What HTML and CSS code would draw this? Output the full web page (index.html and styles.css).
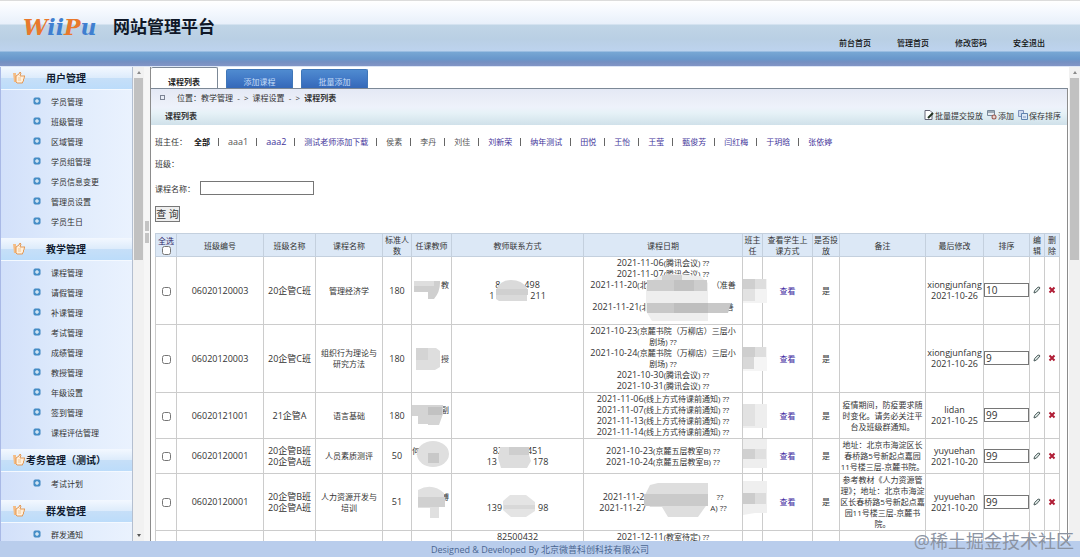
FILE: index.html
```html
<!DOCTYPE html>
<html lang="zh-CN">
  <head>
    <meta charset="utf-8">
    <meta name="viewport" content="width=device-width, initial-scale=1.0">
    <title>网站管理平台</title>
    <link rel="stylesheet" href="styles.css">
  </head>

  <body>
    <!-- Shared icons -->
    <svg class="sprite" aria-hidden="true">
      <symbol id="hand" viewBox="0 0 14 14">
        <path d="M1 2h3v9H2z" fill="#f4bc84"/>
        <path d="M4 5l3-2 1-2 1 1-1 3h5l-1 1 .500 1-1 1v2l-1 1v1H5l-1-1z" fill="#fff0dc" stroke="#e39a58" stroke-width="1"/>
        <path d="M6 7h3M6 9h3" stroke="#f4c796" stroke-width="1"/>
      </symbol>
      <symbol id="plus" viewBox="0 0 8 8">
        <rect x="1" y="1" width="6" height="6" rx="1" fill="#4d94cc" stroke="#3f86c0"/>
        <path d="M4 2v4M2 4h4" stroke="#fff" stroke-width="1"/>
      </symbol>
      <symbol id="pen" viewBox="0 0 8 8">
        <path d="M1 7l.600-2.500L5 1.200q1.500-.600 2 .800L3.500 6z" fill="#dfe9e6" stroke="#4c5c5c" stroke-width="1"/>
      </symbol>
      <symbol id="cross" viewBox="0 0 8 8">
        <path d="M1.500 1.500l5 5M6.500 1.500l-5 5" stroke="#b01c34" stroke-width="2"/>
      </symbol>
    </svg>

    <header class="top">
      <div class="logo" aria-label="WiiPu"><span class="orange">W</span><span class="blue">ii</span><span class="orange">P</span><span class="blue">u</span></div>
      <h1>网站管理平台</h1>
      <nav class="top-nav">
        <a href="#">前台首页</a>
        <a href="#">管理首页</a>
        <a href="#">修改密码</a>
        <a href="#">安全退出</a>
      </nav>
    </header>

    <div class="frames">
      <aside class="sidebar">
        <h2><svg><use href="#hand"/></svg><span>用户管理</span></h2>
        <ul>
          <li><svg><use href="#plus"/></svg><a href="#">学员管理</a></li>
          <li><svg><use href="#plus"/></svg><a href="#">班级管理</a></li>
          <li><svg><use href="#plus"/></svg><a href="#">区域管理</a></li>
          <li><svg><use href="#plus"/></svg><a href="#">学员组管理</a></li>
          <li><svg><use href="#plus"/></svg><a href="#">学员信息变更</a></li>
          <li><svg><use href="#plus"/></svg><a href="#">管理员设置</a></li>
          <li><svg><use href="#plus"/></svg><a href="#">学员生日</a></li>
        </ul>
        <h2><svg><use href="#hand"/></svg><span>教学管理</span></h2>
        <ul>
          <li><svg><use href="#plus"/></svg><a href="#">课程管理</a></li>
          <li><svg><use href="#plus"/></svg><a href="#">请假管理</a></li>
          <li><svg><use href="#plus"/></svg><a href="#">补课管理</a></li>
          <li><svg><use href="#plus"/></svg><a href="#">考试管理</a></li>
          <li><svg><use href="#plus"/></svg><a href="#">成绩管理</a></li>
          <li><svg><use href="#plus"/></svg><a href="#">教授管理</a></li>
          <li><svg><use href="#plus"/></svg><a href="#">年级设置</a></li>
          <li><svg><use href="#plus"/></svg><a href="#">签到管理</a></li>
          <li><svg><use href="#plus"/></svg><a href="#">课程评估管理</a></li>
        </ul>
        <h2><svg><use href="#hand"/></svg><span>考务管理（测试）</span></h2>
        <ul>
          <li><svg><use href="#plus"/></svg><a href="#">考试计划</a></li>
        </ul>
        <h2><svg><use href="#hand"/></svg><span>群发管理</span></h2>
        <ul>
          <li><svg><use href="#plus"/></svg><a href="#">群发通知</a></li>
        </ul>
      </aside>
      <div class="scrollbar">
        <i class="arrow up"></i>
        <i class="thumb"></i>
        <i class="arrow down"></i>
      </div>
      <div class="splitter"><i></i><i></i></div>

      <main>
        <div class="tabs">
          <a class="tab active" href="#">课程列表</a>
          <a class="tab" href="#">添加课程</a>
          <a class="tab" href="#">批量添加</a>
        </div>

        <div class="panel">
          <div class="panel-head">
            <div class="crumbs">
              <i class="dot"></i>
              <span>位置：教学管理 &nbsp;- &nbsp;&gt;&nbsp; 课程设置 &nbsp;- &nbsp;&gt;&nbsp; <b>课程列表</b></span>
            </div>
            <div class="title-row">
              <b>课程列表</b>
              <div class="actions">
                <a href="#">
                  <svg viewBox="0 0 10 10"><path d="M1 .500h5l2 2v7H1z" fill="#fff" stroke="#667"/><path d="M4 8l5-5" stroke="#232" stroke-width="2"/></svg>批量提交投放</a>
                <a href="#">
                  <svg viewBox="0 0 10 10"><path d="M.500.500h7v5h-7z" fill="#e8eef4" stroke="#789"/><path d="M1 2h6" stroke="#567"/><circle cx="7" cy="7" r="2.500" fill="#9a5a50"/><path d="M7 5.500v3M5.500 7h3" stroke="#fff"/></svg>添加</a>
                <a href="#">
                  <svg viewBox="0 0 10 10"><path d="M.500.500h5v6h-5z" fill="#cfdcf0" stroke="#7f93bd"/><path d="M3.500 3.500h6v6h-6z" fill="#dbe8f6" stroke="#5f83ae"/><path d="M5 7h3" stroke="#7f93bd"/></svg>保存排序</a>
              </div>
            </div>
          </div>

          <div class="filter">
            <span class="label">班主任：</span>
            <a class="all" href="#">全部</a><i></i>
            <a class="latin gray" href="#">aaa1</a><i></i>
            <a class="latin" href="#">aaa2</a><i></i>
            <a href="#">测试老师添加下载</a><i></i>
            <a class="gray" href="#">侯素</a><i></i>
            <a class="gray" href="#">李丹</a><i></i>
            <a class="gray" href="#">刘佳</a><i></i>
            <a href="#">刘新荣</a><i></i>
            <a href="#">纳年测试</a><i></i>
            <a href="#">田悦</a><i></i>
            <a href="#">王怡</a><i></i>
            <a href="#">王莹</a><i></i>
            <a href="#">甄俊芳</a><i></i>
            <a href="#">闫红梅</a><i></i>
            <a href="#">于玥晗</a><i></i>
            <a href="#">张依婷</a>
          </div>
          <div class="filter">班级：</div>
          <form class="search">
            <div class="search-row">
              <label for="courseName">课程名称：</label>
              <input type="text" id="courseName">
            </div>
            <button type="button">查 询</button>
          </form>

          <table>
            <colgroup>
              <col class="c-check"><col class="c-code"><col class="c-class"><col class="c-course">
              <col class="c-count"><col class="c-teacher"><col class="c-contact"><col class="c-dates">
              <col class="c-head"><col class="c-view"><col class="c-put"><col>
              <col class="c-edited"><col class="c-sort"><col class="c-icon"><col class="c-icon">
            </colgroup>
            <thead>
              <tr>
                <th><label class="check-all" for="all">全选</label><input type="checkbox" id="all"></th>
                <th>班级编号</th>
                <th>班级名称</th>
                <th>课程名称</th>
                <th>标准人数</th>
                <th>任课教师</th>
                <th>教师联系方式</th>
                <th>课程日期</th>
                <th>班主任</th>
                <th class="inset">查看学生上课方式</th>
                <th>是否投放</th>
                <th>备注</th>
                <th>最后修改</th>
                <th>排序</th>
                <th>编辑</th>
                <th>删除</th>
              </tr>
            </thead>
            <tbody>
              <tr>
                <td><input type="checkbox" aria-label="选择"></td>
                <td class="num">06020120003</td>
                <td class="num">20企管C班</td>
                <td class="inset">管理经济学</td>
                <td class="num">180</td>
                <td class="teacher">教<br>&nbsp;
                  <svg class="mask" viewBox="0 0 40 24"><path d="M2 2h26v2q0 9-6 16h-6v-7H2z" fill="#cfcfcf"/><path d="M2 2h20v5H2z" fill="#dedede"/></svg>
                </td>
                <td class="num phone"><span>8</span><span>498</span><br><span class="wide">1</span><span>211</span>
                  <svg class="mask" viewBox="0 0 40 24"><path d="M5 20V11Q9 1 20 1q11 0 16 8v13H8z" fill="#dadada"/><path d="M5 10h32v6H5z" fill="#d0d0d0"/></svg>
                </td>
                <td class="dates">
                  <time>2021-11-06</time>(腾讯会议) ??<br>
                  <time>2021-11-07</time>(腾讯会议) ??<br>
                  <time>2021-11-20</time>(北<span class="blank"></span>（准善<br>&nbsp;<br>
                  <time>2021-11-21</time>(北<span class="blank"></span>&emsp;&ensp;善<br>&nbsp;
                  <svg class="mask tall" viewBox="0 0 90 54"><path d="M12 8Q18 3 34 3l24 2 8 7v38H10L4 40V16z" fill="#eeeeee"/><path d="M20 4h20v5H20z" fill="#d2d2d2"/><path d="M5 9h60v11H5z" fill="#cdcdcd"/><path d="M32 9h20v11H32z" fill="#c2c2c2"/><path d="M5 32h84l-3 10H5z" fill="#c8c8c8"/><path d="M32 32h34v10H32z" fill="#bebebe"/></svg>
                </td>
                <td><svg class="mask head" viewBox="0 0 24 24"><path d="M0 0h24v24H0z" fill="#f3f3f3"/><path d="M0 0h12v10H0z" fill="#cfcfcf"/><path d="M12 0h11v10H12z" fill="#dedede"/><path d="M0 10h12v12H0z" fill="#e2e2e2"/></svg></td>
                <td><a href="#">查看</a></td>
                <td>是</td>
                <td></td>
                <td class="num">xiongjunfang<br>2021-10-26</td>
                <td><input type="text" value="10" aria-label="排序"></td>
                <td><a href="#" aria-label="编辑"><svg><use href="#pen"/></svg></a></td>
                <td><a href="#" aria-label="删除"><svg><use href="#cross"/></svg></a></td>
              </tr>
              <tr>
                <td><input type="checkbox" aria-label="选择"></td>
                <td class="num">06020120003</td>
                <td class="num">20企管C班</td>
                <td class="inset">组织行为理论与研究方法</td>
                <td class="num">180</td>
                <td class="teacher">授
                  <svg class="mask" viewBox="0 0 40 24"><path d="M4 1h20l4 3v16l-5 3H4z" fill="#dedede"/><path d="M4 1h12v12H4z" fill="#d4d4d4"/></svg>
                </td>
                <td></td>
                <td class="dates">
                  <time>2021-10-23</time>(京麓书院（万柳店）三层小<br>剧场) ??<br>
                  <time>2021-10-24</time>(京麓书院（万柳店）三层小<br>剧场) ??<br>
                  <time>2021-10-30</time>(腾讯会议) ??<br>
                  <time>2021-10-31</time>(腾讯会议) ??
                </td>
                <td><svg class="mask head" viewBox="0 0 24 24"><path d="M0 0h24v24H0z" fill="#f5f5f5"/><path d="M0 0h12v10H0z" fill="#cecece"/><path d="M12 0h11v10H12z" fill="#dedede"/><path d="M0 10h11v12H0z" fill="#d8d8d8"/></svg></td>
                <td><a href="#">查看</a></td>
                <td>是</td>
                <td></td>
                <td class="num">xiongjunfang<br>2021-10-26</td>
                <td><input type="text" value="9" aria-label="排序"></td>
                <td><a href="#" aria-label="编辑"><svg><use href="#pen"/></svg></a></td>
                <td><a href="#" aria-label="删除"><svg><use href="#cross"/></svg></a></td>
              </tr>
              <tr>
                <td><input type="checkbox" aria-label="选择"></td>
                <td class="num">06020121001</td>
                <td class="num">21企管A</td>
                <td class="inset">语言基础</td>
                <td class="num">180</td>
                <td class="teacher">副<br>&nbsp;
                  <svg class="mask" viewBox="0 0 40 24"><path d="M0 1h31v9l-4 11H16v-1H6V12H0z" fill="#d4d4d4"/><path d="M16 3h14v8H16z" fill="#c2c2c2"/></svg>
                </td>
                <td></td>
                <td class="dates">
                  <time>2021-11-06</time>(线上方式待课前通知) ??<br>
                  <time>2021-11-07</time>(线上方式待课前通知) ??<br>
                  <time>2021-11-13</time>(线上方式待课前通知) ??<br>
                  <time>2021-11-14</time>(线上方式待课前通知) ??
                </td>
                <td><svg class="mask head" viewBox="0 0 24 24"><path d="M0 0h24v24H0z" fill="#eeeeee"/><path d="M0 0h12v22H0z" fill="#e2e2e2"/></svg></td>
                <td><a href="#">查看</a></td>
                <td>是</td>
                <td>疫情期间，防疫要求随时变化。请务必关注平台及班级群通知。</td>
                <td class="num">lidan<br>2021-10-25</td>
                <td><input type="text" value="99" aria-label="排序"></td>
                <td><a href="#" aria-label="编辑"><svg><use href="#pen"/></svg></a></td>
                <td><a href="#" aria-label="删除"><svg><use href="#cross"/></svg></a></td>
              </tr>
              <tr>
                <td><input type="checkbox" aria-label="选择"></td>
                <td class="num">06020120001</td>
                <td class="num">20企管B班<br>20企管A班</td>
                <td class="inset">人员素质测评</td>
                <td class="num">50</td>
                <td class="teacher"><span class="surname">何</span><br>&nbsp;
                  <svg class="mask" viewBox="0 0 40 24"><ellipse cx="21" cy="10" rx="16" ry="13" fill="#dfdfdf"/><path d="M16 9h11v10H16z" fill="#c8c8c8"/></svg>
                </td>
                <td class="num phone"><span>82</span><span>451</span><br><span class="wide">13</span><span>178</span>
                  <svg class="mask" viewBox="0 0 40 24"><path d="M9 3h29v8l2 6-4 7H10L7 14z" fill="#dddddd"/><path d="M18 3h20v8H18z" fill="#cecece"/></svg>
                </td>
                <td class="dates">
                  <time>2021-10-23</time>(京麓五层教室B) ??<br>
                  <time>2021-10-24</time>(京麓五层教室B) ??
                </td>
                <td><svg class="mask head" viewBox="0 0 24 24"><path d="M0-5h24v29H0z" fill="#eeeeee"/><path d="M0 5h12v10H0z" fill="#d0d0d0"/><path d="M12 5h11v10H12z" fill="#e0e0e0"/></svg></td>
                <td><a href="#">查看</a></td>
                <td>是</td>
                <td>地址：北京市海淀区长春桥路5号新起点嘉园11号楼三层-京麓书院。</td>
                <td class="num">yuyuehan<br>2021-10-20</td>
                <td><input type="text" value="99" aria-label="排序"></td>
                <td><a href="#" aria-label="编辑"><svg><use href="#pen"/></svg></a></td>
                <td><a href="#" aria-label="删除"><svg><use href="#cross"/></svg></a></td>
              </tr>
              <tr>
                <td><input type="checkbox" aria-label="选择"></td>
                <td class="num">06020120001</td>
                <td class="num">20企管B班<br>20企管A班</td>
                <td class="inset">人力资源开发与培训</td>
                <td class="num">51</td>
                <td class="teacher">博<br>&nbsp;
                  <svg class="mask" viewBox="0 0 40 24"><path d="M6 0q14-8 26 3v14h-5v11h-9V18H6z" fill="#e0e0e0"/><path d="M6 7h27v10H6z" fill="#d0d0d0"/></svg>
                </td>
                <td class="num phone">&nbsp;<br><span class="wide">139</span><span>98</span>
                  <svg class="mask" viewBox="0 0 40 24"><path d="M19 5h16l9 7v9l-9 6H20l-8-7v-9z" fill="#e4e4e4"/><path d="M13 15h31v4H13z" fill="#d8d8d8"/></svg>
                </td>
                <td class="dates">
                  <time>2021-11-2</time><span class="blank long"></span>??<br>
                  <time>2021-11-27</time><span class="blank"></span>A) ??
                  <svg class="mask tall" viewBox="0 9 90 54"><path d="M8 12l8-2h50v20l-10 14H26l-6-10H8L2 24z" fill="#dedede"/><path d="M2 21h64v12H2z" fill="#cacaca"/></svg>
                </td>
                <td><svg class="mask head" viewBox="0 0 24 24"><path d="M0-9h24v32H12l-12 2z" fill="#efefef"/><path d="M0 3h12v11H0z" fill="#cccccc"/><path d="M12 3h11v11H12z" fill="#dcdcdc"/></svg></td>
                <td><a href="#">查看</a></td>
                <td>是</td>
                <td>参考教材《人力资源管理》；地址：北京市海淀区长春桥路5号新起点嘉园11号楼三层-京麓书院。</td>
                <td class="num">yuyuehan<br>2021-10-20</td>
                <td><input type="text" value="99" aria-label="排序"></td>
                <td><a href="#" aria-label="编辑"><svg><use href="#pen"/></svg></a></td>
                <td><a href="#" aria-label="删除"><svg><use href="#cross"/></svg></a></td>
              </tr>
              <tr>
                <td></td><td></td><td></td><td></td><td></td><td></td>
                <td class="num">82500432</td>
                <td class="dates"><time>2021-12-11</time>(教室待定) ??</td>
                <td></td><td></td><td></td><td></td><td></td><td></td><td></td><td></td>
              </tr>
            </tbody>
          </table>
        </div>
      </main>
      <div class="scrollbar">
        <i class="arrow up"></i>
        <i class="thumb"></i>
      </div>
    </div>

    <footer>Designed &amp; Developed By 北京微普科创科技有限公司</footer>
    <div class="watermark">@稀土掘金技术社区</div>
  </body>
</html>
```

FILE: styles.css
```css
/* Reset / Global */
* {
  margin: 0;
  padding: 0;
  box-sizing: border-box;
}

body {
  font-family: "Open Sans", "Noto Sans CJK SC", sans-serif;
  font-size: 8px;
  line-height: 11px;
  color: #333;
  background-color: #fff;
  height: 100vh;
  display: flex;
  flex-direction: column;
  overflow: hidden;
}
a {
  color: inherit;
  text-decoration: none;
}
.sprite {
  display: none;
}

/* Header */
.top {
  flex: none;
  height: 67px;
  padding: 0 35px 0 23px;
  display: flex;
  align-items: flex-start;
  border-top: 1px solid #dcdcdc;
  border-bottom: 1px solid #dce6f6;
  background: linear-gradient(#fff 0, #f7faff 8px, #e8f0fa 23px, #c0d5e6 24px, #b9cfe4 38px, #bdd3ee 50px, #78a7d4 51px, #6997cb 58px, #7590c2 61px, #8295c6 65px);
}
.logo {
  font-family: "DejaVu Serif", serif;
  font-size: 22px;
  font-style: italic;
  font-weight: bold;
  line-height: 24px;
  padding-top: 14px;
  width: 90px;
  white-space: nowrap;
}
.orange {
  color: #e8782c;
}
.blue {
  color: #3f7fd0;
}
.top h1 {
  font-size: 17px;
  line-height: 24px;
  padding-top: 14px;
  color: #101828;
}
.top-nav {
  margin-left: auto;
  padding-top: 36px;
  display: flex;
  gap: 26px;
  font-weight: 500;
  color: #111;
}

/* Frames */
.frames {
  flex: 1;
  min-height: 0;
  display: flex;
}

.sidebar {
  flex: none;
  width: 133px;
  overflow: hidden;
  border-left: 1px solid #a9b9e6;
  border-right: 1px solid #b4bfd0;
  background: linear-gradient(90deg, #d2e0fa, #dfebfc 50%, #eaf2fe);
}
.sidebar h2 {
  height: 23px;
  padding: 0 26px 0 11px;
  display: flex;
  align-items: center;
  font-size: 10px;
  color: #111c30;
  white-space: nowrap;
  border-bottom: 1px solid #f4f9ff;
  background: linear-gradient(#f3f8ff, #dcebfb 50%, #c6dff8 51%, #bcdcfa);
}
.sidebar h2 svg {
  flex: none;
  width: 14px;
  height: 14px;
}
.sidebar h2 span {
  flex: 1;
  text-align: center;
}
.sidebar ul {
  list-style: none;
  padding: 1px 0 7px 32px;
}
.sidebar li {
  height: 20px;
  display: flex;
  align-items: center;
  gap: 10px;
}
.sidebar li svg {
  width: 8px;
  height: 8px;
}

/* Scroll bars and the splitter between the frames */
.scrollbar {
  flex: none;
  width: 11px;
  padding: 4px 1px;
  display: flex;
  flex-direction: column;
  align-items: center;
  background-color: #f1f1f1;
}
.thumb {
  width: 9px;
  height: 39%;
  margin-top: 4px;
  background-color: #c1c1c1;
}
.arrow {
  border: 2px solid transparent;
}
.up {
  border-top: 0;
  border-bottom: 3px solid #8a8a8a;
}
.down {
  margin-top: auto;
  border-bottom: 0;
  border-top: 3px solid #555;
}
.splitter {
  flex: none;
  width: 6px;
  display: flex;
  flex-direction: column;
  justify-content: center;
  gap: 2px;
  padding: 0 1px 144px;
  background-color: #f6f6f6;
}
.splitter i {
  height: 10px;
  background-color: #c4c4c4;
}

/* Main */
main {
  flex: 1;
  min-width: 0;
  display: flex;
  flex-direction: column;
  overflow: hidden;
  border-left: 1px solid #8c8c8c;
}
.tabs {
  flex: none;
  height: 21px;
  display: flex;
  align-items: flex-end;
  gap: 8px;
}
.tab {
  width: 67px;
  height: 19px;
  padding-top: 6px;
  text-align: center;
  color: #c4dcf8;
  border: 1px solid #3f76b8;
  border-bottom: 0;
  border-radius: 2px 2px 0 0;
  background: linear-gradient(#4f8bd0, #3f76c4 60%, #3568b8);
}
.tab.active {
  height: 21px;
  padding-top: 8px;
  color: #222;
  font-weight: bold;
  border-color: #7c8896;
  border-left: 0;
  background: #fff;
}
.panel {
  flex: 1;
  min-height: 0;
  overflow: hidden;
  margin-right: 1px;
  border-top: 1px solid #7c8896;
  border-right: 1px solid #8c8c8c;
}
.panel-head {
  background: linear-gradient(#e4e9f5, #ebeff8 12px, #eef2fb 18px, #e6f2f7 24px, #d0e1ea);
}
.crumbs {
  height: 16px;
  padding-left: 9px;
  display: flex;
  align-items: center;
  gap: 12px;
}
.dot {
  width: 5px;
  height: 5px;
  border: 1px solid #7c8494;
}
.title-row {
  height: 20px;
  padding: 0 6px 0 14px;
  display: flex;
  align-items: center;
  justify-content: space-between;
}
.actions {
  display: flex;
  gap: 4px;
}
.actions a {
  display: flex;
  align-items: center;
  gap: 1px;
}
.actions svg {
  width: 10px;
  height: 10px;
}

.filter {
  padding: 11px 4px 0;
  display: flex;
  align-items: center;
  gap: 8px;
  white-space: nowrap;
}
.filter .label {
  flex: none;
  width: 31px;
}
.filter a {
  color: #43349a;
}
.filter i {
  width: 1px;
  height: 8px;
  margin-right: 1px;
  background-color: #666;
}
.filter a.all {
  color: #111;
  font-weight: bold;
}
.filter a.gray {
  color: #555;
}
.filter .latin {
  font-size: 9px;
}

.search {
  padding: 12px 4px 11px;
}
.search-row {
  display: flex;
  align-items: center;
  gap: 5px;
}
.search input {
  width: 114px;
  height: 14px;
  border: 1px solid #767676;
}
.search button {
  width: 25px;
  height: 16px;
  margin-top: 11px;
  font-family: inherit;
  font-size: 10px;
  line-height: 12px;
  white-space: nowrap;
  color: #333;
  border: 1px solid #777;
  background-color: #efefef;
}

/* Course table */
table {
  width: calc(100% - 11px);
  margin-left: 4px;
  table-layout: fixed;
  border-collapse: collapse;
}
th, td {
  position: relative;
  padding-bottom: 1px;
  border: 1px solid #ccc;
  text-align: center;
  vertical-align: middle;
}
th {
  padding-bottom: 0;
  font-weight: normal;
  border-color: #c4d0de;
  background-color: #dce8f6;
}
.c-check { width: 21px; }
.c-code { width: 87px; }
.c-class { width: 52px; }
.c-course { width: 67px; }
.c-count { width: 29px; }
.c-teacher { width: 40px; }
.c-contact { width: 132px; }
.c-dates { width: 159px; }
.c-head { width: 20px; }
.c-view { width: 50px; }
.c-put { width: 27px; }
.c-edited { width: 58px; }
.c-sort { width: 46px; }
.c-icon { width: 15px; }
.inset {
  padding-left: 3px;
  padding-right: 3px;
}

input[type="checkbox"] {
  width: 9px;
  height: 9px;
  vertical-align: middle;
}
.check-all {
  display: block;
  color: #2c2466;
}
th input[type="checkbox"] {
  display: block;
  margin: 0 auto 1px;
}
.num,
time {
  font-size: 9px;
}
.num {
  white-space: nowrap;
}
td input[type="text"] {
  display: block;
  width: 100%;
  height: 14px;
  padding-left: 1px;
  font-family: inherit;
  font-size: 10px;
  color: #333;
  border: 1px solid #767676;
}
td a {
  color: #3c28a0;
}
td a svg {
  display: block;
  width: 8px;
  height: 8px;
  margin: 0 auto;
}
.dates {
  white-space: nowrap;
}
.blank {
  display: inline-block;
  width: 64px;
}
.blank.long {
  width: 72px;
}
.teacher {
  padding-right: 2px;
  text-align: right;
}
.surname {
  float: left;
}
.phone span + span {
  margin-left: 24px;
}
.phone .wide + span {
  margin-left: 36px;
}

/* Mosaic over private data */
.mask {
  position: absolute;
  top: calc(50% - 12px);
  left: 0;
  width: 40px;
  height: 24px;
  overflow: visible;
}
.phone .mask {
  left: 39px;
}
.mask.head {
  width: 24px;
}
.mask.tall {
  top: calc(50% - 20px);
  left: 58px;
  width: 90px;
  height: 54px;
}

footer {
  flex: none;
  height: 16px;
  padding-top: 3px;
  text-align: center;
  font-size: 9px;
  color: #4a6590;
  background-color: #b9cdec;
}
.watermark {
  position: absolute;
  right: 6px;
  bottom: 5px;
  font-size: 18px;
  line-height: 22px;
  color: #8b93a2;
}
```
